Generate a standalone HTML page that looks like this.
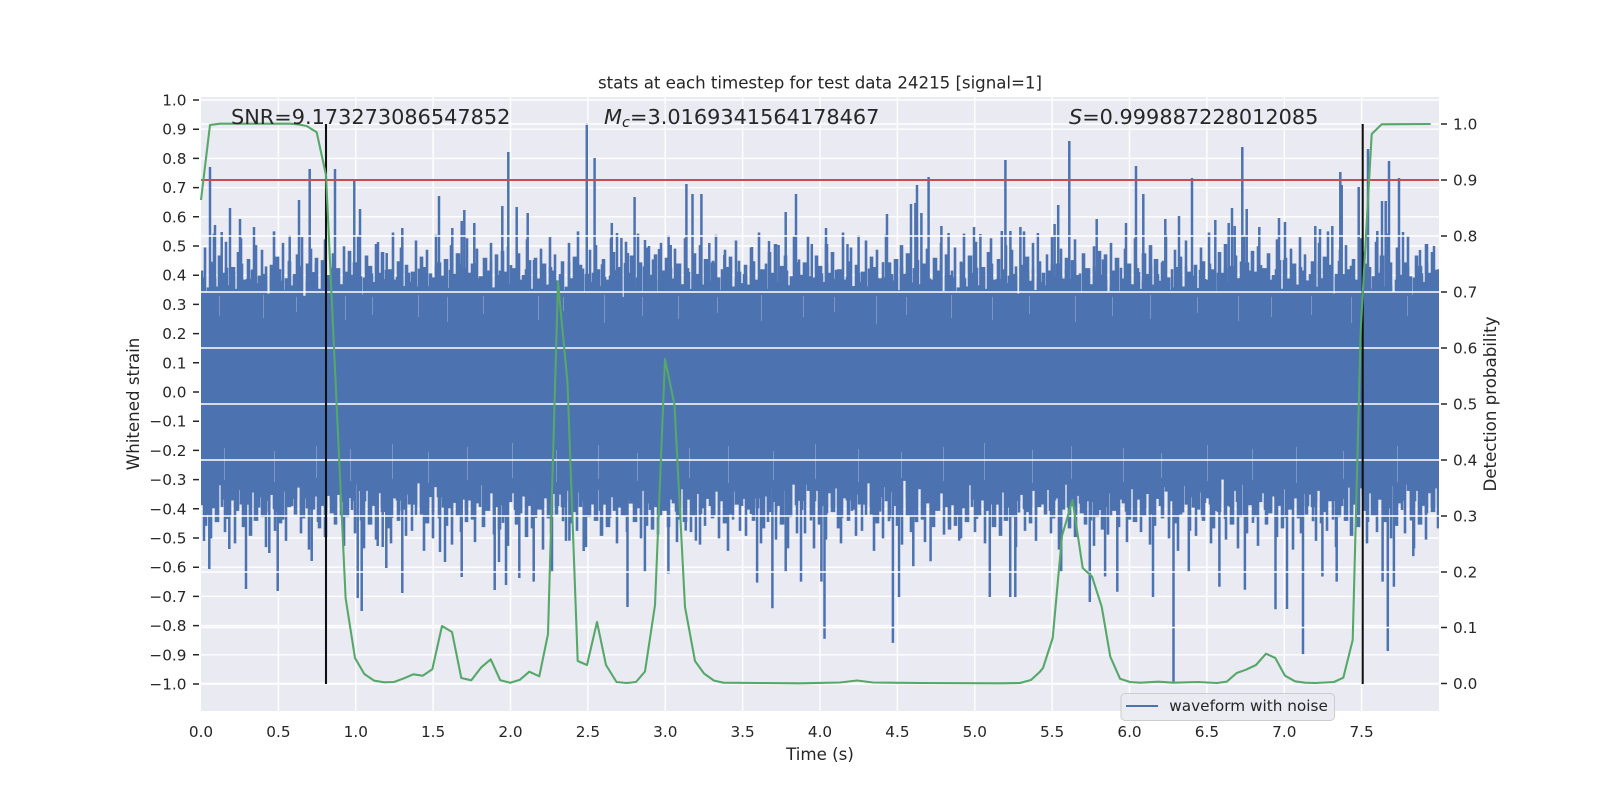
<!DOCTYPE html>
<html><head><meta charset="utf-8"><title>stats at each timestep</title>
<style>
html,body{margin:0;padding:0;background:#fff;width:1600px;height:800px;overflow:hidden}
svg{display:block}
text{font-family:"DejaVu Sans","Liberation Sans",sans-serif;fill:#262626}
.t{font-size:15.28px}
.l{font-size:16.67px}
.a{font-size:20.83px}
</style></head><body>
<svg width="1600" height="800" viewBox="0 0 1600 800" xmlns="http://www.w3.org/2000/svg">
<defs>
<clipPath id="ax"><rect x="201" y="97" width="1238" height="614"/></clipPath>
<path id="A" d="M0 1V-22h3V-48h2V-9h4V-35h3V-60h2V-14h3V-41h4V-26h3V-53h2V-5h4V-31h4V-12h2V-44h3V-56h2V-20h5V-38h3V-3h2V-29h3V-50h2V-17h4V-46h2V-25h4V-8h3V-33h3V-62h2V-40h4V-19h3V-52h2V-11h4V-36h3V-15h5V-42h2V-28h3V-57h2V-6h3V-34h4V-47h2V-21h3V-39h3V-10h3V-37h3V-55h2V-24h4V-2h2V-43h3V-30h5V-16h3V-49h2V-27h3V-45h3V1Z"/>
<path id="B" d="M0 1V-13h2V-35h4V-58h2V-23h3V-7h3V-41h3V-32h4V-18h3V-51h3V-26h3V-44h3V-9h3V-29h5V-61h2V-20h3V-36h3V-48h2V-4h3V-33h3V-17h3V-27h4V-54h2V-14h3V-40h3V-31h3V-46h2V-11h4V-22h3V-59h2V-35h4V-19h3V-38h4V-6h2V-50h3V-25h3V-43h4V-12h3V-30h3V-56h2V-16h3V-34h5V-47h2V-21h3V-3h2V-39h4V-28h3V-52h2V-10h3V-42h3V-24h3V1Z"/>
</defs>
<rect x="201" y="97" width="1238" height="614" fill="#eaeaf2"/>
<path stroke="#fff" stroke-width="1.4" fill="none" d="M278.4 97V711M355.8 97V711M433.1 97V711M510.5 97V711M587.9 97V711M665.3 97V711M742.6 97V711M820 97V711M897.4 97V711M974.8 97V711M1052.1 97V711M1129.5 97V711M1206.9 97V711M1284.3 97V711M1361.6 97V711"/>
<path stroke="#fff" stroke-width="1.4" fill="none" d="M201 100H1439M201 129.2H1439M201 158.4H1439M201 187.6H1439M201 216.8H1439M201 246H1439M201 275.2H1439M201 304.4H1439M201 333.6H1439M201 362.8H1439M201 392H1439M201 421.2H1439M201 450.4H1439M201 479.6H1439M201 508.8H1439M201 538H1439M201 567.2H1439M201 596.4H1439M201 625.6H1439M201 654.8H1439M201 684H1439"/>

<g clip-path="url(#ax)" fill="#4c72b0" stroke="#4c72b0" stroke-width=".6">
<rect x="201" y="303" width="1238" height="170"/>
<use href="#A" transform="translate(201 303) scale(1 1.15)"/>
<use href="#B" transform="translate(351 303) scale(1 1.15)"/>
<use href="#A" transform="translate(651 303) scale(-1 1.15)"/>
<use href="#B" transform="translate(801 303) scale(-1 1.15)"/>
<use href="#B" transform="translate(801 303) scale(1 1.15)"/>
<use href="#A" transform="translate(951 303) scale(1 1.15)"/>
<use href="#B" transform="translate(1251 303) scale(-1 1.15)"/>
<use href="#A" transform="translate(1401 303) scale(-1 1.15)"/>
<use href="#B" transform="translate(1401 303) scale(1 1.15)"/>
<use href="#B" transform="translate(126 303) scale(1 .7)"/>
<use href="#A" transform="translate(276 303) scale(1 .7)"/>
<use href="#B" transform="translate(576 303) scale(-1 .7)"/>
<use href="#A" transform="translate(726 303) scale(-1 .7)"/>
<use href="#A" transform="translate(726 303) scale(1 .7)"/>
<use href="#B" transform="translate(876 303) scale(1 .7)"/>
<use href="#A" transform="translate(1176 303) scale(-1 .7)"/>
<use href="#B" transform="translate(1326 303) scale(-1 .7)"/>
<use href="#A" transform="translate(1326 303) scale(1 .7)"/>
<use href="#B" transform="translate(351 473) scale(-1 -1.25)"/>
<use href="#A" transform="translate(351 473) scale(1 -1.25)"/>
<use href="#B" transform="translate(501 473) scale(1 -1.25)"/>
<use href="#A" transform="translate(801 473) scale(-1 -1.25)"/>
<use href="#A" transform="translate(801 473) scale(1 -1.25)"/>
<use href="#B" transform="translate(1101 473) scale(-1 -1.25)"/>
<use href="#A" transform="translate(1251 473) scale(-1 -1.25)"/>
<use href="#B" transform="translate(1251 473) scale(1 -1.25)"/>
<use href="#A" transform="translate(1401 473) scale(1 -1.25)"/>
<use href="#A" transform="translate(126 473) scale(1 -.8)"/>
<use href="#B" transform="translate(276 473) scale(1 -.8)"/>
<use href="#A" transform="translate(576 473) scale(-1 -.8)"/>
<use href="#B" transform="translate(726 473) scale(-1 -.8)"/>
<use href="#B" transform="translate(726 473) scale(1 -.8)"/>
<use href="#A" transform="translate(876 473) scale(1 -.8)"/>
<use href="#B" transform="translate(1176 473) scale(-1 -.8)"/>
<use href="#A" transform="translate(1326 473) scale(-1 -.8)"/>
<use href="#B" transform="translate(1326 473) scale(1 -.8)"/>
</g>
<path stroke="#4c72b0" stroke-width="2.5" fill="none" d="M210 167V310M215 225V310M221.7 232V310M230 208V310M240 219V310M254 227V310M289.7 235V310M299 200V310M309.7 169V310M335 169V310M354.3 179V310M360 209V310M378 242V310M386.7 253V310M402.3 228V310M439 196V310M452.3 228V310M461.7 221V310M464.3 210V310M474.3 223V310M502.3 206V310M508.3 152V310M516.7 207V310M527.7 213V310M586.8 123V310M594.6 158V310M611.8 223V310M617 233V310M621.4 238V310M627.9 253V310M634.6 197V310M645 240V310M649 246V310M659 249V310M668.6 235V310M670.7 245V310M686.4 184V310M692.5 194V310M701.4 194V310M709.3 243V310M724.3 255V310M752 247V310M769 241V310M778.6 245V310M785.7 212V310M796 194V310M811.8 244V310M826 228V310M847.5 244V310M858.6 235V310M887 214V310M895.7 260V310M911 204V310M915.4 203V310M917 185V310M921.4 213V310M928.6 177V310M941.4 226V310M948.6 233V310M974 227V310M980.4 234V310M1001.8 231V310M1005.4 160V310M1010.4 231V310M1020.4 227V310M1037.9 233V310M1054.6 224V310M1058.2 205V310M1069.3 141V310M1096.7 219V310M1126 223V310M1136 166V310M1143.3 194V310M1165.3 219V310M1179 216V310M1192 178V310M1215.3 220V310M1228.7 223V310M1232 208V310M1234.7 226V310M1242.3 147V310M1246.7 209V310M1259.3 227V310M1279 218V310M1285 222V310M1315.3 226V310M1320 229V310M1332.3 226V310M1340.3 172V310M1341.7 185V310M1358.7 187V310M1368 149V310M1377.3 231V310M1382 201V310M1385.7 201V310M1389 161V310M1399 178V310M1403 232V310M1420 250V310M1434 246V310"/>
<path stroke="#4c72b0" stroke-width="2.5" fill="none" d="M209.3 569V465M246 589V465M277.7 591V465M311.7 561V465M357.7 598V465M361.7 611V465M386.3 568V465M402.3 593V465M445 562V465M461.7 577V465M494.7 590V465M506 585V465M519.3 578V465M499 562V465M229.3 549V465M269.3 553V465M204 541V465M377.7 546V465M382.7 547V465M440 552V465M533.7 581.6V465M552 571.4V465M569.4 540.8V465M583.7 551V465M627.5 607V465M644.9 571.4V465M668.4 573.5V465M685.7 530.6V465M695.9 540.8V465M714.3 515.3V465M757.1 582.6V465M772.4 608.2V465M785.7 571.4V465M801 581.6V465M824.5 638.8V465M821.4 581.6V465M892.9 642.9V465M899 597V465M913.3 566.3V465M930.6 561.2V465M959.2 540.8V465M989.8 597V465M1010.2 597V465M1015.3 597V465M1061.2 571.4V465M1089.8 602V465M1105.1 576.5V465M1117.3 591.8V465M1153 597V465M1173.5 684V465M1188.8 571.4V465M1219.4 586.7V465M1244.9 589.8V465M1275.5 609.2V465M1287 609V465M1303 654.1V465M1322.4 576.5V465M1336.7 581.6V465M1382.6 581.6V465M1387.8 651V465M1393.9 586.7V465M1413.3 556.1V465"/>
<path stroke="#eaeaf2" stroke-opacity=".3" stroke-width="1" fill="none" d="M219.5 296V316M263.5 295V318M296.5 297V312M345.5 296V320M372.5 297V315M418.5 295V317M447.5 297V322M483.5 296V314M538.5 296V320M563.5 297V311M604.5 295V323M642.5 297V316M678.5 296V319M717.5 297V313M761.5 295V321M803.5 296V317M834.5 297V312M876.5 296V324M906.5 297V315M951.5 295V318M992.5 297V320M1029.5 296V314M1075.5 296V322M1112.5 297V316M1150.5 295V319M1197.5 297V313M1238.5 296V321M1271.5 297V317M1311.5 296V315M1351.5 297V323M1407.5 296V316M224.5 480V448M274.5 482V451M316.5 478V446M350.5 481V449M392.5 479V444M428.5 483V452M467.5 480V447M512.5 478V443M556.5 482V450M598.5 479V445M637.5 481V453M689.5 478V448M728.5 483V446M773.5 480V451M815.5 479V444M858.5 482V449M901.5 478V452M943.5 481V447M984.5 480V443M1032.5 483V450M1071.5 479V446M1123.5 482V448M1161.5 478V453M1207.5 481V445M1252.5 480V449M1296.5 483V447M1343.5 479V451M1397.5 482V446"/>

<path stroke="#fff" stroke-width="1.5" fill="none" d="M201 124H1439M201 180H1439M201 236H1439M201 292H1439M201 348H1439M201 404H1439M201 460H1439M201 516H1439M201 572H1439M201 627.5H1439M201 683.5H1439"/>
<path stroke="#c44e52" stroke-width="2.08" fill="none" d="M201 180H1439"/>
<path stroke="#111" stroke-width="2.08" fill="none" d="M326 124V684M1362.7 124V684"/>
<path stroke="#55a868" stroke-width="2.08" fill="none" stroke-linejoin="round" d="M201 200L210 125L220 123.7L290 123.7L297 124.2L306.7 126L316.7 132.3L326 175L345.6 598L355 658L364.3 674L374.3 680.7L384.3 682.3L394 682L404 678.3L413.3 674.3L422.7 675.7L432.3 669.3L442 626L452 632L461.3 678L471.3 680.3L481.3 667.3L490.7 659.3L500.3 680.3L510.3 682.7L520 679.7L529.3 671.7L539.3 676.3L548 634L558 282L567.5 383L577.7 661L587 665L597 622L606 665L616.5 682L626.5 683L636 682L645 671.5L655 605L665 359L674.5 405L685 607L695 661L704 673.5L714 680.6L723.5 682.7L760 683L800 683.3L840 682.5L857 680.5L873 682.5L920 683L1000 683.3L1020 683L1031 680L1040 671.7L1043 668L1052.7 638L1062 536L1072.5 500L1082.7 568L1092 576.5L1101.7 606.7L1110.3 656.7L1120 678.7L1130 682L1140 682.7L1158.3 681.7L1173.3 682.7L1198 682L1216.7 683L1226.7 681.7L1236.7 673L1246 669.7L1256 665L1266 653.7L1275.3 658L1285 675.7L1295 681.3L1305 682.7L1315 683L1334 682L1343.3 677.7L1352.7 640L1360.7 330L1366.7 223L1371.7 134L1381.7 124.3L1430.7 124"/>

<path stroke="#262626" stroke-width="1.5" fill="none" d="M193 100h6M193 129.2h6M193 158.4h6M193 187.6h6M193 216.8h6M193 246h6M193 275.2h6M193 304.4h6M193 333.6h6M193 362.8h6M193 392h6M193 421.2h6M193 450.4h6M193 479.6h6M193 508.8h6M193 538h6M193 567.2h6M193 596.4h6M193 625.6h6M193 654.8h6M193 684h6"/>
<path stroke="#262626" stroke-width="1.5" fill="none" d="M1441 124h6M1441 180h6M1441 236h6M1441 292h6M1441 348h6M1441 404h6M1441 460h6M1441 516h6M1441 572h6M1441 627.5h6M1441 683.5h6"/>

<g class="t" text-anchor="end">
<text x="186.5" y="105.5">1.0</text><text x="186.5" y="134.7">0.9</text><text x="186.5" y="163.9">0.8</text><text x="186.5" y="193.1">0.7</text><text x="186.5" y="222.3">0.6</text><text x="186.5" y="251.5">0.5</text><text x="186.5" y="280.7">0.4</text><text x="186.5" y="309.9">0.3</text><text x="186.5" y="339.1">0.2</text><text x="186.5" y="368.3">0.1</text><text x="186.5" y="397.5">0.0</text><text x="186.5" y="426.7">−0.1</text><text x="186.5" y="455.9">−0.2</text><text x="186.5" y="485.1">−0.3</text><text x="186.5" y="514.3">−0.4</text><text x="186.5" y="543.5">−0.5</text><text x="186.5" y="572.7">−0.6</text><text x="186.5" y="601.9">−0.7</text><text x="186.5" y="631.1">−0.8</text><text x="186.5" y="660.3">−0.9</text><text x="186.5" y="689.5">−1.0</text>
</g>
<g class="t">
<text x="1453" y="129.5">1.0</text><text x="1453" y="185.5">0.9</text><text x="1453" y="241.5">0.8</text><text x="1453" y="297.5">0.7</text><text x="1453" y="353.5">0.6</text><text x="1453" y="409.5">0.5</text><text x="1453" y="465.5">0.4</text><text x="1453" y="521.5">0.3</text><text x="1453" y="577.5">0.2</text><text x="1453" y="633">0.1</text><text x="1453" y="689">0.0</text>
</g>
<g class="t" text-anchor="middle">
<text x="201" y="737">0.0</text><text x="278.4" y="737">0.5</text><text x="355.8" y="737">1.0</text><text x="433.1" y="737">1.5</text><text x="510.5" y="737">2.0</text><text x="587.9" y="737">2.5</text><text x="665.3" y="737">3.0</text><text x="742.6" y="737">3.5</text><text x="820" y="737">4.0</text><text x="897.4" y="737">4.5</text><text x="974.8" y="737">5.0</text><text x="1052.1" y="737">5.5</text><text x="1129.5" y="737">6.0</text><text x="1206.9" y="737">6.5</text><text x="1284.3" y="737">7.0</text><text x="1361.6" y="737">7.5</text>
</g>

<text class="l" x="820" y="88.3" text-anchor="middle" textLength="444" lengthAdjust="spacing">stats at each timestep for test data 24215 [signal=1]</text>
<text class="l" x="820" y="760" text-anchor="middle">Time (s)</text>
<text class="l" transform="translate(139 404) rotate(-90)" text-anchor="middle">Whitened strain</text>
<text class="l" transform="translate(1496 404) rotate(-90)" text-anchor="middle">Detection probability</text>

<text class="a" x="231" y="124">SNR=9.173273086547852</text>
<text class="a" x="604" y="124"><tspan font-style="italic">M</tspan><tspan font-style="italic" font-size="14.6" dy="3">c</tspan><tspan dy="-3">=3.0169341564178467</tspan></text>
<text class="a" x="1069" y="124"><tspan font-style="italic">S</tspan>=0.999887228012085</text>

<rect x="1121" y="693.5" width="213.5" height="27" rx="4" fill="#eaeaf2" fill-opacity=".9" stroke="#ccc" stroke-width="1"/>
<path stroke="#4c72b0" stroke-width="2.08" fill="none" d="M1126 706H1158"/>
<text class="t" x="1169.3" y="711">waveform with noise</text>
</svg>
</body></html>
